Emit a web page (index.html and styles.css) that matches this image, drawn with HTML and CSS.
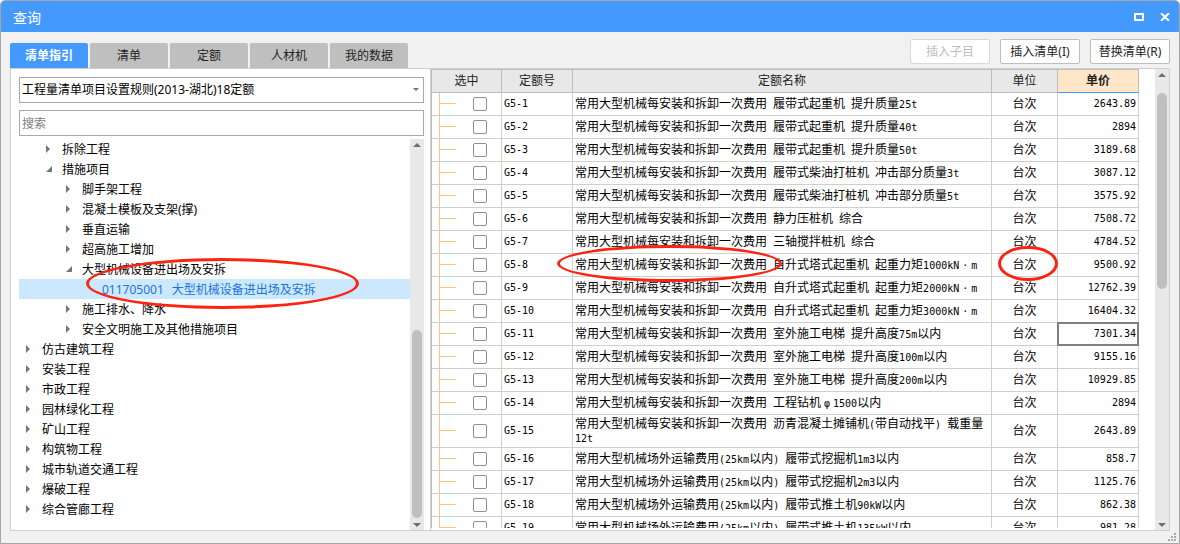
FILE: index.html
```html
<!DOCTYPE html>
<html lang="zh-CN">
<head>
<meta charset="utf-8">
<title>查询</title>
<link rel="stylesheet" href="styles.css">
</head>
<body>
<div class="window">
  <header class="titlebar">
    <h1 class="title">查询</h1>
    <button class="win-btn" type="button" aria-label="最大化"><svg width="10" height="8" viewBox="0 0 10 8"><path d="M0 0H10V8H0ZM2 2V6H8V2Z" fill="#fff" fill-rule="evenodd"/></svg></button>
    <button class="win-btn" type="button" aria-label="关闭"><svg width="10" height="8" viewBox="0 0 10 8"><path d="M1 0L9 8M9 0L1 8" stroke="#fff" stroke-width="2"/></svg></button>
  </header>

  <div class="toolbar">
    <nav class="tabs">
      <button class="tab active" type="button">清单指引</button>
      <button class="tab" type="button">清单</button>
      <button class="tab" type="button">定额</button>
      <button class="tab" type="button">人材机</button>
      <button class="tab" type="button">我的数据</button>
    </nav>
    <div class="actions">
      <button class="action" type="button" disabled>插入子目</button>
      <button class="action" type="button">插入清单(I)</button>
      <button class="action" type="button">替换清单(R)</button>
    </div>
  </div>

  <main class="content">
    <section class="guide">
      <div class="combo">
        <select class="field" aria-label="清单规则"><option>工程量清单项目设置规则(2013-湖北)18定额</option></select>
        <svg class="combo-arrow" width="6" height="3" viewBox="0 0 6 3"><path d="M0 0H6L3 3Z" fill="#777"/></svg>
      </div>
      <input class="field search" type="text" placeholder="搜索" aria-label="搜索">
      <div class="tree-area">
        <ul class="tree">
          <li class="node level-1"><i class="twist"></i>拆除工程</li>
          <li class="node level-1"><i class="twist open"></i>措施项目</li>
          <li class="node level-2"><i class="twist"></i>脚手架工程</li>
          <li class="node level-2"><i class="twist"></i>混凝土模板及支架(撑)</li>
          <li class="node level-2"><i class="twist"></i>垂直运输</li>
          <li class="node level-2"><i class="twist"></i>超高施工增加</li>
          <li class="node level-2"><i class="twist open"></i>大型机械设备进出场及安拆</li>
          <li class="node level-3 selected"><i class="twist none"></i><span>011705001</span><span class="node-name">大型机械设备进出场及安拆</span><span class="mark mark-node"></span></li>
          <li class="node level-2"><i class="twist"></i>施工排水、降水</li>
          <li class="node level-2"><i class="twist"></i>安全文明施工及其他措施项目</li>
          <li class="node"><i class="twist"></i>仿古建筑工程</li>
          <li class="node"><i class="twist"></i>安装工程</li>
          <li class="node"><i class="twist"></i>市政工程</li>
          <li class="node"><i class="twist"></i>园林绿化工程</li>
          <li class="node"><i class="twist"></i>矿山工程</li>
          <li class="node"><i class="twist"></i>构筑物工程</li>
          <li class="node"><i class="twist"></i>城市轨道交通工程</li>
          <li class="node"><i class="twist"></i>爆破工程</li>
          <li class="node"><i class="twist"></i>综合管廊工程</li>
        </ul>
        <div class="scrollbar">
          <svg width="8" height="4" viewBox="0 0 8 4"><path d="M0 4H8L4 0Z" fill="#6d6d78"/></svg>
          <div class="track track-end"><div class="thumb"></div></div>
          <svg width="8" height="4" viewBox="0 0 8 4"><path d="M0 0H8L4 4Z" fill="#6d6d78"/></svg>
        </div>
      </div>
    </section>

    <section class="quota">
      <div class="grid-area">
        <table class="grid">
          <colgroup><col class="col-check"><col class="col-code"><col><col class="col-unit"><col class="col-price"></colgroup>
          <thead><tr><th>选中</th><th>定额号</th><th>定额名称</th><th>单位</th><th class="sorted">单价</th></tr></thead>
          <tbody>
            <tr><td class="check"><input type="checkbox" aria-label="G5-1"></td><td class="code">G5-1</td><td>常用大型机械每安装和拆卸一次费用<b> </b>履带式起重机<b> </b>提升质量<b>25t</b></td><td class="unit">台次</td><td class="price">2643.89</td></tr>
            <tr><td class="check"><input type="checkbox" aria-label="G5-2"></td><td class="code">G5-2</td><td>常用大型机械每安装和拆卸一次费用<b> </b>履带式起重机<b> </b>提升质量<b>40t</b></td><td class="unit">台次</td><td class="price">2894</td></tr>
            <tr><td class="check"><input type="checkbox" aria-label="G5-3"></td><td class="code">G5-3</td><td>常用大型机械每安装和拆卸一次费用<b> </b>履带式起重机<b> </b>提升质量<b>50t</b></td><td class="unit">台次</td><td class="price">3189.68</td></tr>
            <tr><td class="check"><input type="checkbox" aria-label="G5-4"></td><td class="code">G5-4</td><td>常用大型机械每安装和拆卸一次费用<b> </b>履带式柴油打桩机<b> </b>冲击部分质量<b>3t</b></td><td class="unit">台次</td><td class="price">3087.12</td></tr>
            <tr><td class="check"><input type="checkbox" aria-label="G5-5"></td><td class="code">G5-5</td><td>常用大型机械每安装和拆卸一次费用<b> </b>履带式柴油打桩机<b> </b>冲击部分质量<b>5t</b></td><td class="unit">台次</td><td class="price">3575.92</td></tr>
            <tr><td class="check"><input type="checkbox" aria-label="G5-6"></td><td class="code">G5-6</td><td>常用大型机械每安装和拆卸一次费用<b> </b>静力压桩机<b> </b>综合</td><td class="unit">台次</td><td class="price">7508.72</td></tr>
            <tr><td class="check"><input type="checkbox" aria-label="G5-7"></td><td class="code">G5-7</td><td>常用大型机械每安装和拆卸一次费用<b> </b>三轴搅拌桩机<b> </b>综合</td><td class="unit">台次</td><td class="price">4784.52</td></tr>
            <tr><td class="check"><input type="checkbox" aria-label="G5-8"></td><td class="code">G5-8</td><td class="marked">常用大型机械每安装和拆卸一次费用<b> </b>自升式塔式起重机<b> </b>起重力矩<b>1000kN<i class="dot">·</i>m</b><span class="mark mark-name"></span></td><td class="unit marked">台次<span class="mark mark-unit"></span></td><td class="price">9500.92</td></tr>
            <tr><td class="check"><input type="checkbox" aria-label="G5-9"></td><td class="code">G5-9</td><td>常用大型机械每安装和拆卸一次费用<b> </b>自升式塔式起重机<b> </b>起重力矩<b>2000kN<i class="dot">·</i>m</b></td><td class="unit">台次</td><td class="price">12762.39</td></tr>
            <tr><td class="check"><input type="checkbox" aria-label="G5-10"></td><td class="code">G5-10</td><td>常用大型机械每安装和拆卸一次费用<b> </b>自升式塔式起重机<b> </b>起重力矩<b>3000kN<i class="dot">·</i>m</b></td><td class="unit">台次</td><td class="price">16404.32</td></tr>
            <tr><td class="check"><input type="checkbox" aria-label="G5-11"></td><td class="code">G5-11</td><td>常用大型机械每安装和拆卸一次费用<b> </b>室外施工电梯<b> </b>提升高度<b>75m</b>以内</td><td class="unit">台次</td><td class="price focused">7301.34</td></tr>
            <tr><td class="check"><input type="checkbox" aria-label="G5-12"></td><td class="code">G5-12</td><td>常用大型机械每安装和拆卸一次费用<b> </b>室外施工电梯<b> </b>提升高度<b>100m</b>以内</td><td class="unit">台次</td><td class="price">9155.16</td></tr>
            <tr><td class="check"><input type="checkbox" aria-label="G5-13"></td><td class="code">G5-13</td><td>常用大型机械每安装和拆卸一次费用<b> </b>室外施工电梯<b> </b>提升高度<b>200m</b>以内</td><td class="unit">台次</td><td class="price">10929.85</td></tr>
            <tr><td class="check"><input type="checkbox" aria-label="G5-14"></td><td class="code">G5-14</td><td>常用大型机械每安装和拆卸一次费用<b> </b>工程钻机<b><i class="dot">φ</i>1500</b>以内</td><td class="unit">台次</td><td class="price">2894</td></tr>
            <tr class="tall"><td class="check"><input type="checkbox" aria-label="G5-15"></td><td class="code">G5-15</td><td>常用大型机械每安装和拆卸一次费用<b> </b>沥青混凝土摊铺机<b>(</b>带自动找平<b>) </b>载重量<b> 12t</b></td><td class="unit">台次</td><td class="price">2643.89</td></tr>
            <tr><td class="check"><input type="checkbox" aria-label="G5-16"></td><td class="code">G5-16</td><td>常用大型机械场外运输费用<b>(25km</b>以内<b>) </b>履带式挖掘机<b>1m3</b>以内</td><td class="unit">台次</td><td class="price">858.7</td></tr>
            <tr><td class="check"><input type="checkbox" aria-label="G5-17"></td><td class="code">G5-17</td><td>常用大型机械场外运输费用<b>(25km</b>以内<b>) </b>履带式挖掘机<b>2m3</b>以内</td><td class="unit">台次</td><td class="price">1125.76</td></tr>
            <tr><td class="check"><input type="checkbox" aria-label="G5-18"></td><td class="code">G5-18</td><td>常用大型机械场外运输费用<b>(25km</b>以内<b>) </b>履带式推土机<b>90kW</b>以内</td><td class="unit">台次</td><td class="price">862.38</td></tr>
            <tr><td class="check"><input type="checkbox" aria-label="G5-19"></td><td class="code">G5-19</td><td>常用大型机械场外运输费用<b>(25km</b>以内<b>) </b>履带式推土机<b>135kW</b>以内</td><td class="unit">台次</td><td class="price">981.28</td></tr>
          </tbody>
        </table>
      </div>
      <div class="scrollbar">
        <svg width="8" height="4" viewBox="0 0 8 4"><path d="M0 4H8L4 0Z" fill="#6d6d78"/></svg>
        <div class="track"><div class="thumb"></div></div>
        <svg width="8" height="4" viewBox="0 0 8 4"><path d="M0 0H8L4 4Z" fill="#6d6d78"/></svg>
      </div>
    </section>
  </main>

  <footer class="statusbar">
    <svg width="8" height="8" viewBox="0 0 8 8"><path d="M6 0h2v2h-2zM3 3h2v2h-2zM6 3h2v2h-2zM0 6h2v2h-2zM3 6h2v2h-2zM6 6h2v2h-2z" fill="#a8a8a8"/></svg>
  </footer>
</div>
</body>
</html>
```
FILE: styles.css
```css
* { box-sizing: border-box; }

body {
  margin: 0;
  background: #fff;
  color: #000;
  font: 12px/20px "Noto Sans", "Noto Sans CJK SC", sans-serif;
}

button, input, select { font: inherit; color: inherit; }

.window {
  display: flex;
  flex-direction: column;
  height: 100vh;
  border: 1px solid #a6a6a6;
  border-radius: 5px 5px 0 0;
  background: #f1f1f1;
  overflow: hidden;
}

.titlebar {
  display: flex;
  align-items: center;
  gap: 6px;
  flex: none;
  height: 31px;
  padding: 0 4px 0 12px;
  background: #4499ff;
  color: #fff;
}

.title { flex: 1; margin: 0; font-size: 14px; font-weight: 400; padding-top: 2px; }

.win-btn {
  display: flex;
  align-items: center;
  justify-content: center;
  width: 20px;
  height: 20px;
  padding: 0;
  border: 0;
  background: none;
}

.toolbar {
  display: flex;
  justify-content: space-between;
  flex: none;
  height: 36px;
  padding: 0 9px;
}

.tabs { display: flex; align-items: flex-end; gap: 2px; }

.tab {
  width: 78px;
  height: 25px;
  padding: 0;
  border: 0;
  border-radius: 2px 2px 0 0;
  background: #bfbfbf;
  color: #222;
}

.tab.active { background: #4499ff; color: #fff; font-weight: 700; }

.actions { display: flex; gap: 10px; padding-top: 7px; }

.action {
  width: 80px;
  height: 25px;
  padding: 0;
  border: 1px solid #bdbdbd;
  border-radius: 2px;
  background: #fff;
  color: #222;
}

.action:disabled { border-color: #d8d8d8; color: #bdbdbd; }

.content {
  display: flex;
  flex: 1;
  min-height: 0;
  margin: 0 9px;
  border: 1px solid #cfcfcf;
  background: #fff;
}

.guide {
  display: flex;
  flex-direction: column;
  flex: none;
  width: 420px;
  padding: 8px 6px 0 8px;
  border-right: 1px solid #cfcfcf;
}

.combo { position: relative; margin-bottom: 7px; }

.combo-arrow { position: absolute; right: 5px; top: 11px; }

.field {
  display: block;
  width: 100%;
  height: 26px;
  padding: 0 2px;
  border: 1px solid #a9a9a9;
  border-radius: 0;
  background: #fff;
  appearance: none;
}

.search { flex: none; margin-bottom: 3px; }

.search::placeholder { color: #808080; }

.tree-area { display: flex; flex: 1; min-height: 0; }

.tree {
  flex: 1;
  margin: 0;
  padding: 0;
  list-style: none;
  line-height: 22px;
  overflow: hidden;
}

.node {
  display: flex;
  align-items: flex-start;
  position: relative;
  height: 20px;
  padding-left: 7px;
}

.level-1 { padding-left: 27px; }
.level-2 { padding-left: 47px; }
.level-3 { padding-left: 67px; }

.selected { background: #cce8ff; color: #1a73e0; }

.node-name { margin-left: 8px; }

.twist {
  flex: none;
  width: 6px;
  height: 8px;
  margin: 6px 10px 0 0;
  background: #767676;
  clip-path: polygon(0 0, 4px 4px, 0 8px);
}

.twist.open { clip-path: polygon(6px 1px, 6px 7px, 0 7px); }

.twist.none { background: none; }

.scrollbar {
  display: flex;
  flex-direction: column;
  align-items: center;
  flex: none;
  width: 14px;
  padding: 4px 0 3px;
  background: #e8e8e8;
}

.track {
  display: flex;
  flex-direction: column;
  flex: 1;
  width: 10px;
  padding: 16px 0 5px;
}

.track-end { justify-content: flex-end; }

.thumb { height: 46%; border-radius: 5px; background: #bfbfbf; }

.track-end .thumb { height: 53%; }

.quota { display: flex; flex: 1; min-width: 0; }

.grid-area {
  flex: 1;
  min-width: 0;
  margin-bottom: 2px;
  padding-right: 16px;
  overflow: hidden;
}

.grid {
  width: 100%;
  table-layout: fixed;
  border-collapse: separate;
  border-spacing: 0;
  border-top: 1px solid #bdbdbd;
  border-left: 1px solid #bdbdbd;
  line-height: 14px;
}

.col-check { width: 70px; }
.col-code { width: 71px; }
.col-unit { width: 66px; }
.col-price { width: 81px; }

.grid th {
  height: 23px;
  padding: 0;
  border-right: 1px solid #bdbdbd;
  border-bottom: 1px solid #bdbdbd;
  background: #e8e8e8;
  color: #222;
  font-weight: 400;
}

.grid th.sorted { border-bottom-color: #4499ff; background: #ffe6c8; font-weight: 700; }

.grid td {
  height: 23px;
  padding: 0 2px;
  border-right: 1px solid #cfcfcf;
  border-bottom: 1px solid #cfcfcf;
}

.grid .tall td { height: 33px; }

.grid b, .grid .code, .grid .price {
  font-family: "DejaVu Sans Mono", monospace;
  font-size: 10px;
  font-weight: 400;
}

.grid b { line-height: 12px; }

.dot {
  display: inline-block;
  width: 12px;
  font-style: normal;
  text-align: center;
}

.grid .unit { text-align: center; }

.grid .price { text-align: right; }

.grid .check {
  padding: 0 0 0 41px;
  background:
    linear-gradient(#ffc77d, #ffc77d) 7px 0 / 1px 100% no-repeat,
    linear-gradient(#ffc77d, #ffc77d) 7px 10px / 17px 1px no-repeat;
}

.grid .tall .check { background-position: 7px 0, 7px 15px; }

.grid tr:last-child .check { background-size: 1px 11px, 17px 1px; }

.check input {
  display: block;
  width: 14px;
  height: 14px;
  margin: 0;
  border: 1px solid #8f8f8f;
  border-radius: 2px;
  background: #fff;
  appearance: none;
}

.marked, .focused { position: relative; }

.focused::after {
  content: "";
  position: absolute;
  inset: -1px;
  border: 2px solid #808080;
}

.mark {
  position: absolute;
  z-index: 1;
  border: 3px solid #fb2312;
  border-radius: 50%;
  pointer-events: none;
}

.mark-node { left: 67px; top: -21px; width: 273px; height: 51px; }
.mark-name { left: -16px; top: -9px; width: 225px; height: 37px; }
.mark-unit { left: 6px; top: -8px; width: 60px; height: 35px; }

.statusbar {
  display: flex;
  align-items: center;
  justify-content: flex-end;
  flex: none;
  height: 12px;
  padding-right: 3px;
}
```
